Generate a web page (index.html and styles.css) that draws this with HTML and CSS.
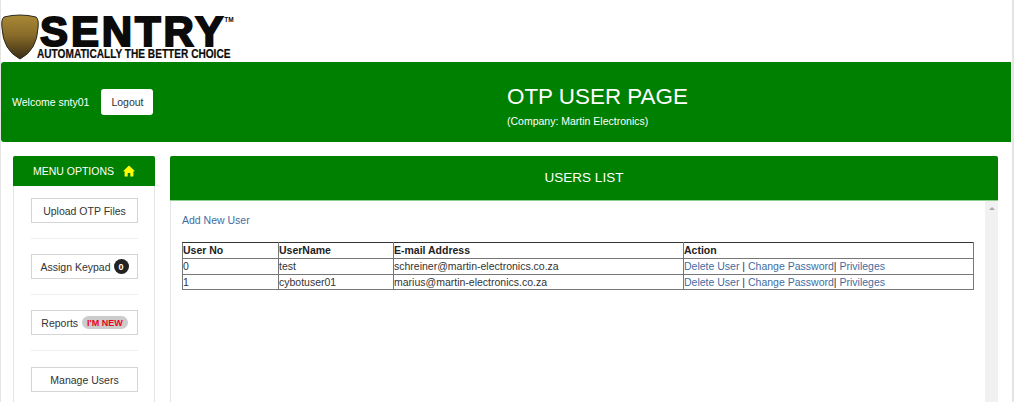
FILE: index.html
```html
<!DOCTYPE html>
<html lang="en">
<head>
<meta charset="utf-8">
<title>OTP User Page</title>
<link rel="stylesheet" href="styles.css">
</head>
<body>
<div class="page">
  <header class="brand">
    <svg class="shield" width="38" height="50" viewBox="0 0 38 50">
      <defs>
        <linearGradient id="gold" x1="0" y1="0" x2="0" y2="1">
          <stop offset="0" stop-color="#a98a35"/>
          <stop offset="0.45" stop-color="#8a6c2a"/>
          <stop offset="1" stop-color="#3a2d14"/>
        </linearGradient>
      </defs>
      <path d="M3 3 Q19 -1 35 3 Q38 5 37 14 Q36 36 19 45 Q2 36 1 14 Q0 5 3 3Z" fill="url(#gold)" stroke="#2a2a20" stroke-width="1"/>
    </svg>
    <div class="wordmark">
      <div class="name">SENTRY<sup class="tm">TM</sup></div>
      <div class="tagline">AUTOMATICALLY THE BETTER CHOICE</div>
    </div>
  </header>

  <section class="banner">
    <div class="welcome">
      <span>Welcome snty01</span>
      <a class="logout" href="#">Logout</a>
    </div>
    <div class="heading">
      <h1>OTP USER PAGE</h1>
      <p>(Company: Martin Electronics)</p>
    </div>
  </section>

  <div class="columns">
    <aside class="menu">
      <div class="menu-head">
        <span>MENU OPTIONS</span>
        <svg width="12" height="12" viewBox="0 0 12 12"><path d="M6 .5 12 6.2H10.4V11.5H7.3V8H4.7V11.5H1.6V6.2H0Z" fill="#ffff00"/></svg>
      </div>
      <div class="menu-body">
        <a class="menu-btn" href="#">Upload OTP Files</a>
        <hr>
        <a class="menu-btn" href="#">Assign Keypad <span class="count">0</span></a>
        <hr>
        <a class="menu-btn" href="#">Reports <span class="new">I'M NEW</span></a>
        <hr class="wide">
        <a class="menu-btn" href="#">Manage Users</a>
      </div>
    </aside>

    <main class="panel">
      <div class="panel-head">USERS LIST</div>
      <div class="panel-body">
        <div class="panel-content">
          <a class="add" href="#">Add New User</a>
          <table>
            <colgroup><col class="c1"><col class="c2"><col class="c3"><col></colgroup>
            <thead>
              <tr><th>User No</th><th>UserName</th><th>E-mail Address</th><th>Action</th></tr>
            </thead>
            <tbody>
              <tr><td>0</td><td>test</td><td>schreiner@martin-electronics.co.za</td><td><a href="#">Delete User</a> | <a href="#">Change Password</a>| <a href="#">Privileges</a></td></tr>
              <tr class="last"><td>1</td><td>cybotuser01</td><td>marius@martin-electronics.co.za</td><td><a href="#">Delete User</a> | <a href="#">Change Password</a>| <a href="#">Privileges</a></td></tr>
            </tbody>
          </table>
        </div>
        <div class="scrollbar"><span class="arrow"></span></div>
      </div>
    </main>
  </div>
</div>
</body>
</html>
```

FILE: styles.css
```css
* { box-sizing: border-box; }
html, body { margin: 0; height: 100%; overflow: hidden; background: #fff; }
body { font-family: "Liberation Sans", Arial, sans-serif; font-size: 10.5px; color: #333; }
a { color: #3f6c9f; text-decoration: none; }

.page { width: 1014px; height: 402px; overflow: hidden; border-right: 2px solid #e4e4e4; border-left: 1px solid #e4e4e4; }

.brand { height: 62px; display: flex; align-items: flex-start; padding-top: 14px; background: #fff; margin-left: -1px; }
.shield { flex: none; margin-left: 1px; }
.wordmark { margin-left: 1px; color: #0b0b0b; font-weight: bold; }
.name { font-size: 42px; line-height: 33px; height: 34px; padding-top: 1px; letter-spacing: 2.9px; -webkit-text-stroke: 2px #0b0b0b; white-space: nowrap; position: relative; }
.tm { font-size: 6.5px; line-height: 7px; letter-spacing: 0; -webkit-text-stroke: 0; position: absolute; top: 2px; margin-left: -2px; }
.tagline { font-size: 12.6px; line-height: 12px; margin-left: -3px; white-space: nowrap; -webkit-text-stroke: .2px #0b0b0b; transform: scaleX(.803); transform-origin: left center; }

.banner { height: 80px; width: 1010px; background: #008000; color: #fff; border-radius: 3px 0 0 3px; position: relative; display: flex; justify-content: center; }
.welcome { position: absolute; left: 11px; top: 27px; display: flex; align-items: center; gap: 12px; }
.logout { background: #fff; color: #333; width: 52px; height: 26px; border-radius: 3px; display: flex; align-items: center; justify-content: center; }
.heading { width: 181px; margin-left: 183px; padding-top: 21px; white-space: nowrap; }
.heading h1 { margin: 0; font-size: 22.4px; font-weight: normal; line-height: 28px; }
.heading p { margin: 4px 0 0; line-height: 13px; }

.columns { display: flex; align-items: flex-start; padding: 14px 0 0 12px; gap: 15px; }

.menu { width: 142px; height: 250px; flex: none; border-right: 1px solid #e4e4e4; border-left: 1px solid #e4e4e4; }
.menu-head { margin: 0 -1px; height: 30px; background: #008000; color: #fff; border-radius: 2px 2px 0 0; display: flex; align-items: center; justify-content: center; gap: 9px; }
.menu-body { padding: 12px 16px 0 17px; }
.menu-btn { display: flex; align-items: center; justify-content: center; gap: 3px; height: 25px; border: 1px solid #d5d5d5; color: #333; white-space: nowrap; }
.menu-body hr { border: 0; border-top: 1px solid #eee; margin: 15px 0; }
.menu-body hr.wide { margin-bottom: 16px; }
.count { background: #222; color: #fff; font-size: 9px; font-weight: bold; width: 15px; height: 15px; border-radius: 8px; display: inline-flex; align-items: center; justify-content: center; }
.new { background: #ccc; color: #f00020; font-size: 9px; font-weight: bold; height: 13px; padding: 0 5px; border-radius: 7px; display: inline-flex; align-items: center; margin-left: 1px; }

.panel { width: 828px; flex: none; }
.panel-head { height: 45px; padding-bottom: 2px; background: #008000; color: #fff; font-size: 13.5px; display: flex; align-items: center; justify-content: center; border-radius: 2px 2px 0 0; border-bottom: 1px solid #8fd08f; }
.panel-body { display: flex; height: 220px; border-left: 1px solid #e4e4e4; }
.panel-content { flex: 1; padding: 13px 11px 0 11px; min-width: 0; }
.add { display: block; line-height: 13px; }
table { border-collapse: collapse; width: 792px; margin-top: 15px; line-height: 13px; table-layout: fixed; border: 1px solid #444; }
.c1 { width: 96px; }
.c2 { width: 115px; }
.c3 { width: 290px; }
th, td { border: 1px solid #777; padding: 1px 1px 1px 0; text-align: left; height: 16px; color: #333; white-space: nowrap; }
.last td { height: 15px; padding-bottom: 0; }
th { color: #222; border-top-color: #333; }
td a { color: #3f6c9f; }
.scrollbar { width: 13px; flex: none; background: #f1f1f1; display: flex; justify-content: center; padding-top: 6px; }
.arrow { width: 0; height: 0; border-left: 3px solid transparent; border-right: 3px solid transparent; border-bottom: 3px solid #a8a8a8; }
```
